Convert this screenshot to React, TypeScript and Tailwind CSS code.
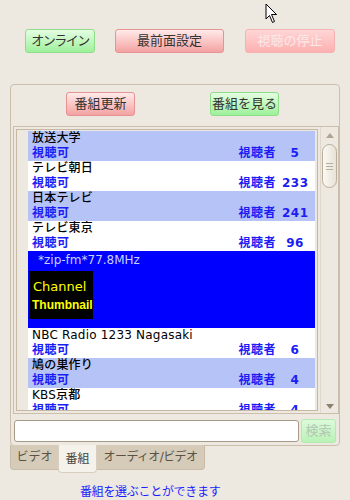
import React from "react";

const jp = '"DejaVu Sans", "Noto Sans CJK JP", sans-serif';

type Channel = { name: string; viewers: number };

const before: Channel[] = [
  { name: "放送大学", viewers: 5 },
  { name: "テレビ朝日", viewers: 233 },
  { name: "日本テレビ", viewers: 241 },
  { name: "テレビ東京", viewers: 96 },
];

const after: Channel[] = [
  { name: "NBC Radio 1233 Nagasaki", viewers: 6 },
  { name: "鳩の巣作り", viewers: 4 },
  { name: "KBS京都", viewers: 4 },
];

const ChannelRow = ({ ch, shaded }: { ch: Channel; shaded: boolean }) => (
  <div className={`h-[30px] flex flex-col pl-[4px] pr-[7px] text-[12px] leading-[15px] ${shaded ? "bg-[#b6c3f6]" : "bg-white"}`}>
    <div className="text-black font-medium tracking-[0.2px] whitespace-nowrap">{ch.name}</div>
    <div className="flex text-[#1c1cf5] font-bold tracking-[0.5px]">
      <span>視聴可</span>
      <span className="ml-auto">視聴者</span>
      <span className="w-[32px] text-center pl-[6px]">{ch.viewers}</span>
    </div>
  </div>
);

const Btn = ({ label, tone, className }: { label: string; tone: "green" | "pink" | "pinkOff" | "greenOff"; className: string }) => {
  const tones = {
    green: "bg-gradient-to-b from-[#e4fde2] to-[#9df09a] border-[#8fdc8b] text-[#333]",
    pink: "bg-gradient-to-b from-[#ffeaea] to-[#f3a2a2] border-[#e69393] text-[#333]",
    pinkOff: "bg-gradient-to-b from-[#ffd6d6] to-[#fdb0b0] border-[#f4b3b3] text-[#fbe9e9]",
    greenOff: "bg-gradient-to-b from-[#dcfada] to-[#b9f2b6] border-[#b5e8b2] text-[#b3c7b3]",
  };
  return (
    <div className={`flex items-center justify-center border rounded-[3px] text-[13px] ${tones[tone]} ${className}`}>
      {label}
    </div>
  );
};

export default function App() {
  return (
    <div className="relative w-[350px] h-[500px] bg-[#ede9e1] overflow-hidden" style={{ fontFamily: jp }}>
      {/* mouse pointer */}
      <svg className="absolute left-[265px] top-[3px]" width="14" height="21" viewBox="0 0 14 21">
        <path d="M1 1 L1 16 L4.5 12.5 L7.5 19.5 L9.5 18.5 L6.5 11.5 L11.5 11.5 Z" fill="white" stroke="black" strokeWidth="1" />
      </svg>

      <div className="flex pt-[29px] h-[53px]">
        <Btn label="オンライン" tone="green" className="ml-[25px] w-[70px] h-[24px] tracking-[-1.5px]" />
        <Btn label="最前面設定" tone="pink" className="ml-[20px] w-[109px] h-[24px]" />
        <Btn label="視聴の停止" tone="pinkOff" className="ml-[21px] w-[90px] h-[24px]" />
      </div>

      <div className="ml-[10px] mt-[31px] w-[330px] h-[362px] border border-[#cbbfac] rounded-[4px] flex flex-col">
        <div className="flex pt-[7px] h-[41px]">
          <Btn label="番組更新" tone="pink" className="ml-[55px] w-[69px] h-[24px]" />
          <Btn label="番組を見る" tone="green" className="ml-[75px] w-[69px] h-[24px]" />
        </div>

        <div className="ml-[2px] w-[326px] h-[288px] border border-[#cbbfac] flex">
          <div className="m-[2px] w-[303px] border border-[#c5b9a6] bg-[#ede9e1] overflow-hidden">
            <div className="ml-[11px] w-[287px] pt-[1px]">
              {before.map((ch, i) => (
                <ChannelRow key={ch.name} ch={ch} shaded={i % 2 === 0} />
              ))}
              <div className="h-[77px] bg-[#0000ff] pt-[2px]">
                <div className="pl-[10px] text-[12px] leading-[14px] text-[#c9d0ff]">*zip-fm*77.8MHz</div>
                <div className="mt-[4px] ml-[1px] w-[64px] h-[48px] bg-black flex flex-col justify-center gap-[4px] text-[#ffff00]">
                  <div className="pl-[4px] text-[13px] leading-[15px]">Channel</div>
                  <div className="pl-[3px] text-[12px] leading-[14px] font-bold" style={{ fontFamily: '"Liberation Sans", sans-serif' }}>Thumbnail</div>
                </div>
              </div>
              {after.map((ch, i) => (
                <ChannelRow key={ch.name} ch={ch} shaded={i % 2 === 1} />
              ))}
            </div>
          </div>
          <div className="w-[18px] flex flex-col items-center pt-[6px] border-l border-[#e0d8cb]">
            <div className="w-0 h-0 border-l-[4px] border-r-[4px] border-b-[5px] border-l-transparent border-r-transparent border-b-[#b0a592]" />
            <div className="mt-[6px] w-[15px] h-[44px] rounded-full border border-[#b9ae9b] bg-gradient-to-r from-[#fbf9f5] to-[#e8e2d6] flex flex-col items-center justify-center gap-[2px]">
              <div className="w-[7px] h-px bg-[#b9ae9b]" />
              <div className="w-[7px] h-px bg-[#b9ae9b]" />
              <div className="w-[7px] h-px bg-[#b9ae9b]" />
            </div>
            <div className="mt-auto mb-[4px] w-0 h-0 border-l-[4px] border-r-[4px] border-t-[5px] border-l-transparent border-r-transparent border-t-[#8d8270]" />
          </div>
        </div>

        <div className="flex items-center mt-[5px] ml-[3px]">
          <div className="w-[285px] h-[22px] bg-white border border-[#a79b87] rounded-[3px]" />
          <Btn label="検索" tone="greenOff" className="ml-[2px] w-[35px] h-[24px]" />
        </div>
      </div>

      <div className="ml-[10px] w-[195px] h-[25px] -mt-[1px] flex bg-[#d5cbb8] border border-t-0 border-[#c8bca8] rounded-b-[4px] text-[12px] text-[#5a5244] whitespace-nowrap">
        <div className="w-[47px] flex items-center justify-center">ビデオ</div>
        <div className="w-[39px] h-[28px] bg-[#f5f2ec] border border-t-0 border-[#d8cfc0] rounded-b-[4px] flex items-center justify-center text-[#4a4438]">番組</div>
        <div className="flex-1 flex items-center justify-center tracking-[-0.6px]">オーディオ/ビデオ</div>
      </div>

      <div className="mt-[13px] pl-[80px] text-[12px] text-[#1c1cff] tracking-[-0.3px]">番組を選ぶことができます</div>
    </div>
  );
}
